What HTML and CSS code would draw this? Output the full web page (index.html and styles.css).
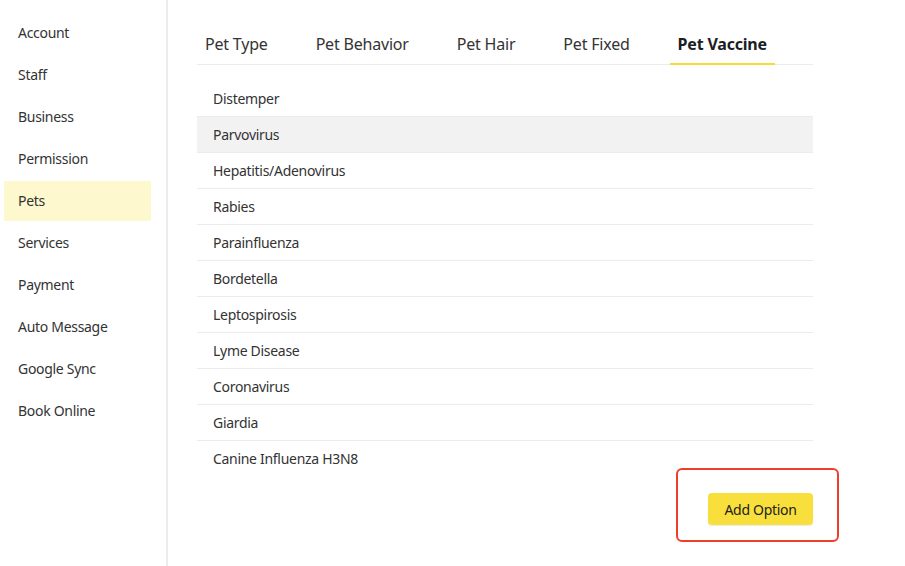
FILE: index.html
```html
<!DOCTYPE html>
<html lang="en">
<head>
    <meta charset="UTF-8">
    <meta name="viewport" content="width=device-width, initial-scale=1.0">
    <title>Settings - Pets</title>
    <link rel="stylesheet" href="styles.css">
</head>
<body>
    <div class="layout">
        <!-- Sidebar menu -->
        <nav class="sidebar">
            <a class="menu-item">Account</a>
            <a class="menu-item">Staff</a>
            <a class="menu-item">Business</a>
            <a class="menu-item">Permission</a>
            <a class="menu-item active">Pets</a>
            <a class="menu-item">Services</a>
            <a class="menu-item">Payment</a>
            <a class="menu-item">Auto Message</a>
            <a class="menu-item">Google Sync</a>
            <a class="menu-item">Book Online</a>
        </nav>

        <!-- Main content -->
        <main class="content">
            <div class="tabs">
                <div class="tab">Pet Type</div>
                <div class="tab">Pet Behavior</div>
                <div class="tab">Pet Hair</div>
                <div class="tab">Pet Fixed</div>
                <div class="tab active">Pet Vaccine</div>
            </div>

            <ul class="options">
                <li>Distemper</li>
                <li class="hover">Parvovirus</li>
                <li>Hepatitis/Adenovirus</li>
                <li>Rabies</li>
                <li>Parainfluenza</li>
                <li>Bordetella</li>
                <li>Leptospirosis</li>
                <li>Lyme Disease</li>
                <li>Coronavirus</li>
                <li>Giardia</li>
                <li>Canine Influenza H3N8</li>
            </ul>

            <div class="actions">
                <button class="btn-add">Add Option</button>
            </div>
        </main>
    </div>
</body>
</html>
```

FILE: styles.css
```css
/* Base */
body {
    margin: 0;
    font-family: "Noto Sans", "Open Sans", sans-serif;
    color: #333;
    background-color: #fff;
}

.layout {
    display: flex;
    min-height: 566px;
}

/* Sidebar */
.sidebar {
    width: 147px;
    padding: 13px 15px 0 4px;
    border-right: 2px solid #ececec;
    display: flex;
    flex-direction: column;
    gap: 2px;
}

.menu-item {
    display: flex;
    align-items: center;
    height: 40px;
    padding-left: 14px;
    padding-bottom: 1px;
    box-sizing: border-box;
    font-size: 14px;
    letter-spacing: -0.3px;
    color: #333;
    border-radius: 2px;
    cursor: pointer;
}

.menu-item.active {
    background-color: #fdf8cd;
}

/* Main */
.content {
    width: 616px;
    padding: 24px 0 0 29px;
}

.tabs {
    display: flex;
    gap: 32px;
    border-bottom: 1px solid #ececec;
}

.tab {
    height: 40px;
    padding: 0 8px;
    font-size: 16px;
    letter-spacing: -0.2px;
    line-height: 40px;
    color: #333;
    cursor: pointer;
}

.tab.active {
    font-weight: bold;
    color: #1b1e24;
    height: 39px;
    border-bottom: 2px solid #f7dc34;
    margin-bottom: -1px;
}

/* Option list */
.options {
    list-style: none;
    margin: 16px 0 0;
    padding: 0;
}

.options li {
    height: 35px;
    line-height: 35px;
    padding-left: 16px;
    font-size: 14px;
    letter-spacing: -0.3px;
    border-bottom: 1px solid #ececec;
}

.options li:last-child {
    border-bottom: none;
}

.options li.hover {
    background-color: #f2f2f2;
}

/* Button */
.actions {
    display: flex;
    justify-content: flex-end;
    margin-top: 17px;
}

.btn-add {
    position: relative;
    width: 105px;
    height: 32px;
    border: none;
    border-radius: 4px;
    background-color: #f9df3b;
    box-shadow: 0 1px 1px rgba(0, 0, 0, 0.08);
    font-family: inherit;
    font-size: 14px;
    letter-spacing: -0.3px;
    color: #222;
    cursor: pointer;
}

/* red highlight box around the button */
.btn-add::after {
    content: "";
    position: absolute;
    left: -32px;
    top: -25px;
    right: -26px;
    bottom: -17px;
    border: 2.5px solid #f23c2c;
    border-radius: 6px;
}
```
